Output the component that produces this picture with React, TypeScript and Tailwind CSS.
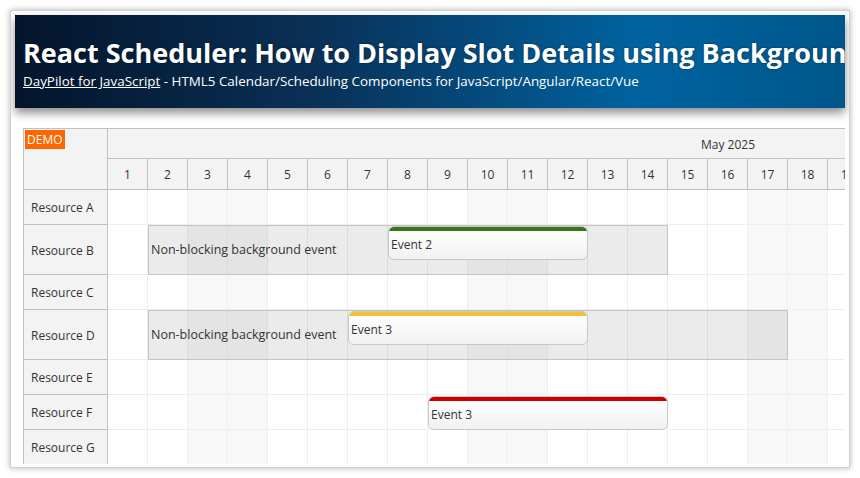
import React from "react";

const days = Array.from({ length: 19 }, (_, i) => i + 1);
const weekend = [3, 4, 10, 11, 17, 18];

type Ev = { start: number; end: number; text: string; bar: string };
type Row = {
  name: string;
  h: string;
  bg?: { start: number; end: number };
  ev?: Ev;
};

const rows: Row[] = [
  { name: "Resource A", h: "h-[35px]" },
  {
    name: "Resource B",
    h: "h-[50px]",
    bg: { start: 2, end: 14 },
    ev: { start: 8, end: 12, text: "Event 2", bar: "bg-[#38761d]" },
  },
  { name: "Resource C", h: "h-[35px]" },
  {
    name: "Resource D",
    h: "h-[50px]",
    bg: { start: 2, end: 17 },
    ev: { start: 7, end: 12, text: "Event 3", bar: "bg-[#f1c232]" },
  },
  { name: "Resource E", h: "h-[35px]" },
  {
    name: "Resource F",
    h: "h-[35px]",
    ev: { start: 9, end: 14, text: "Event 3", bar: "bg-[#cc0000]" },
  },
  { name: "Resource G", h: "h-[35px]" },
];

const COL = 40;

function Header() {
  return (
    <div className="h-[93px] px-2 pt-[20px] text-white bg-[linear-gradient(to_right,#03152b_0%,#0a2f55_35%,#0063a0_75%,#00568b_100%)] shadow-[0_5px_9px_rgba(0,0,0,0.45)] overflow-hidden whitespace-nowrap">
      <h1 className="text-[27px] leading-[36px] font-bold [text-shadow:0_0_2px_rgba(0,0,0,0.6)]">
        React Scheduler: How to Display Slot Details using Background Events
      </h1>
      <div className="text-[13.4px] leading-[18px] mt-[1px]">
        <a className="underline">DayPilot for JavaScript</a> - HTML5
        Calendar/Scheduling Components for JavaScript/Angular/React/Vue
      </div>
    </div>
  );
}

function EventBox({ ev }: { ev: Ev }) {
  return (
    <div
      className="absolute top-[1px] h-[34px] rounded-[6px] border border-[#c8c8c8] bg-[linear-gradient(to_bottom,#ffffff,#f2f2f2)] overflow-hidden flex flex-col"
      style={{ left: (ev.start - 1) * COL, width: (ev.end - ev.start + 1) * COL }}
    >
      <div className={`h-[4px] ${ev.bar}`} />
      <div className="flex-1 flex items-center px-[2px] text-[12px] text-[#333]">
        {ev.text}
      </div>
    </div>
  );
}

function Scheduler() {
  return (
    <div className="mt-[20px] ml-[8px] w-[822px] h-[336px] overflow-hidden border-t border-l border-[#c0c0c0] text-[#333] text-[12px]">
      {/* time header */}
      <div className="flex">
        <div className="w-[84px] h-[61px] shrink-0 bg-[#f3f3f3] border-r border-b border-[#c0c0c0] p-[1px]">
          <span className="inline-block bg-[#ff6600] text-white text-[12px] leading-[19px] px-[2px]">
            DEMO
          </span>
        </div>
        <div className="flex flex-col">
          <div className="h-[30px] w-[1240px] bg-[#f3f3f3] border-b border-[#c0c0c0] flex items-center justify-center pt-[2px]">
            May 2025
          </div>
          <div className="flex h-[31px] border-b border-[#c0c0c0]">
            {days.map((d) => (
              <div
                key={d}
                className="w-[40px] shrink-0 bg-[#f3f3f3] border-r border-[#c0c0c0] flex items-center justify-center pt-[1px]"
              >
                {d}
              </div>
            ))}
          </div>
        </div>
      </div>
      {/* rows */}
      {rows.map((r) => (
        <div key={r.name} className={`flex ${r.h}`}>
          <div className="w-[84px] shrink-0 bg-[#f3f3f3] border-r border-b border-[#c0c0c0] flex items-center pl-[7px] pt-[2px]">
            {r.name}
          </div>
          <div className="relative flex">
            {days.map((d) => (
              <div
                key={d}
                className={`w-[40px] shrink-0 border-r border-b border-[#eeeeee] ${
                  weekend.includes(d) ? "bg-[#f8f8f8]" : "bg-white"
                }`}
              />
            ))}
            {r.bg && (
              <div
                className="absolute top-0 bottom-0 border border-[#c4c4c4] bg-black/[0.08] flex items-center pl-[2px] pt-[1px] text-[12.5px] text-[#333]"
                style={{
                  left: (r.bg.start - 1) * COL,
                  width: (r.bg.end - r.bg.start + 1) * COL,
                }}
              >
                Non-blocking background event
              </div>
            )}
            {r.ev && <EventBox ev={r.ev} />}
          </div>
        </div>
      ))}
    </div>
  );
}

export default function App() {
  return (
    <div className="w-[860px] h-[478px] bg-white p-[10px] font-['Open_Sans',sans-serif]">
      <div className="h-[458px] border border-[#d0d0d0] shadow-[0_0_6px_rgba(0,0,0,0.3)] p-[4px] overflow-hidden">
        <Header />
        <Scheduler />
      </div>
    </div>
  );
}
